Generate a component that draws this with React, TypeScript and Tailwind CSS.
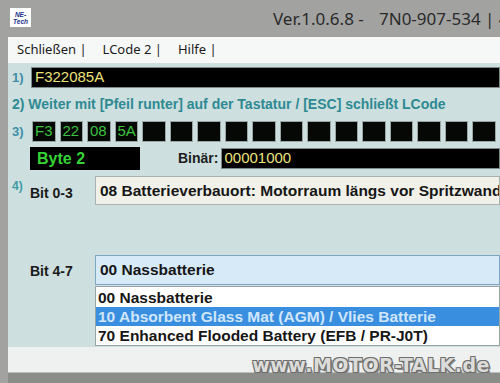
import React from 'react';

const cells = ['F3', '22', '08', '5A', '', '', '', '', '', '', '', '', '', '', '', '', '', ''];

const options = [
   { code: '00 Nassbatterie', active: false },
   { code: '10 Absorbent Glass Mat (AGM) / Vlies Batterie', active: true },
   { code: '70 Enhanced Flooded Battery (EFB / PR-J0T)', active: false },
];

export default function App() {
   return (
      <div className="relative flex h-[383px] w-[500px] flex-col overflow-hidden bg-[#a2a3a1] font-['Liberation_Sans',Arial,sans-serif]">
         {/* Titelleiste */}
         <div className="flex h-[37px] shrink-0 items-start overflow-hidden">
            <div className="ml-[10px] mt-[8px] flex h-[19px] w-[21px] shrink-0 flex-col items-center justify-center bg-white text-[6.5px] font-bold italic leading-[7px] text-[#24318a]">
               <span>NE-</span>
               <span>Tech</span>
            </div>
            <div className="ml-[242px] mt-[7px] flex whitespace-nowrap font-['Noto_Sans',sans-serif] text-[17px] leading-[24px] text-[#2a2a2a]">
               <span className="w-[106px] shrink-0">Ver.1.0.6.8 -</span>
               <span>7N0-907-534 | 4</span>
            </div>
         </div>

         <div className="ml-[8px] flex flex-1 flex-col">
            {/* Menü */}
            <div className="flex h-[26px] shrink-0 items-center gap-[16px] bg-[#f6f8f7] pl-[9px] font-['Noto_Sans',sans-serif] text-[13px] text-[#1b1b1b]">
               <span>Schließen |</span>
               <span>LCode 2 |</span>
               <span>Hilfe |</span>
            </div>

            {/* Hauptbereich */}
            <div className="flex h-[284px] shrink-0 flex-col overflow-hidden bg-[#cddfde] pl-[4px] pt-[4px]">
               <div className="flex h-[21px] items-center">
                  <span className="w-[19px] shrink-0 text-[13px] font-bold text-[#3d8fa6]">1)</span>
                  <div className="flex h-[21px] flex-1 items-center border border-[#7d8c8b] bg-black pl-[3px] text-[15px] text-[#ebe27c]">
                     F322085A
                  </div>
               </div>

               <div className="mt-[7px] h-[18px] whitespace-nowrap text-[14px] font-bold leading-[18px] text-[#2d8a93]">
                  2) Weiter mit [Pfeil runter] auf der Tastatur / [ESC] schließt LCode
               </div>

               <div className="mt-[8px] flex h-[21px] items-center overflow-hidden">
                  <span className="w-[20px] shrink-0 text-[13px] font-bold text-[#3d8fa6]">3)</span>
                  <div className="flex shrink-0 gap-[4px]">
                     {cells.map((value, index) => (
                        <div
                           key={index}
                           className="flex h-[21px] w-[23.5px] shrink-0 items-center border border-[#9aa6a5] bg-[#050805] pl-[2px] text-[15px] text-[#3cc23c]"
                        >
                           {value}
                        </div>
                     ))}
                  </div>
               </div>

               <div className="mt-[5px] flex h-[23px] items-center">
                  <div className="ml-[18px] flex h-[23px] w-[110px] shrink-0 items-center bg-black pl-[7px] text-[16px] font-bold text-[#36d336]">
                     Byte 2
                  </div>
                  <span className="ml-[38px] shrink-0 text-[14px] font-bold text-[#1c1c1c]">Binär:</span>
                  <div className="ml-[3px] flex h-[21px] flex-1 items-center border border-[#7d8c8b] bg-black pl-[2px] text-[15px] text-[#ebe27c]">
                     00001000
                  </div>
               </div>

               <div className="mt-[6px] flex h-[29px]">
                  <span className="w-[18px] shrink-0 pt-[1px] text-[12px] font-bold text-[#3d9ca6]">4)</span>
                  <span className="w-[65px] shrink-0 pt-[7px] text-[14px] font-bold text-[#1a1a1a]">Bit 0-3</span>
                  <div className="flex h-[29px] min-w-0 flex-1 items-center overflow-hidden whitespace-nowrap border border-[#a9b2b0] bg-[#f1f1ea] pl-[4px] text-[15.5px] font-bold text-[#161616]">
                     08 Batterieverbauort: Motorraum längs vor Spritzwand
                  </div>
               </div>

               <div className="mt-[50px] flex h-[30px]">
                  <span className="ml-[18px] w-[65px] shrink-0 pt-[6px] text-[14px] font-bold text-[#1a1a1a]">Bit 4-7</span>
                  <div className="flex h-[30px] flex-1 items-center border border-[#7fa6c4] bg-[#d6eaf8] pl-[4px] text-[15.5px] font-bold text-[#161616]">
                     00 Nassbatterie
                  </div>
               </div>

               <div className="ml-[83px] mt-[1px] flex flex-col border border-[#9aa3a3] bg-white pt-[1px]">
                  {options.map((option) => (
                     <div
                        key={option.code}
                        className={
                           option.active
                              ? 'flex h-[19px] items-center whitespace-nowrap bg-[#3a8ee0] pl-[2px] text-[15.5px] font-bold text-[#cfe6fb]'
                              : 'flex h-[19px] items-center whitespace-nowrap pl-[2px] text-[15.5px] font-bold text-[#161616]'
                        }
                     >
                        {option.code}
                     </div>
                  ))}
               </div>
            </div>

            <div className="h-[25px] shrink-0 bg-[#eef1f0]" />
            <div className="flex-1 border-t border-[#bcc0bf] bg-[#8b8d89]" />
         </div>

         {/* Wasserzeichen */}
         <div className="absolute bottom-[8px] right-[10px] whitespace-nowrap font-['DejaVu_Sans',sans-serif] text-[19px] font-bold leading-[20px] tracking-[0.5px] text-[#dcdcda] [text-shadow:1px_1px_0_#6e6e6c,-1px_-1px_0_#6e6e6c,1px_-1px_0_#6e6e6c,-1px_1px_0_#6e6e6c,2px_2px_0_#8a8a88]">
            www.MOTOR-TALK.de
         </div>
      </div>
   );
}
